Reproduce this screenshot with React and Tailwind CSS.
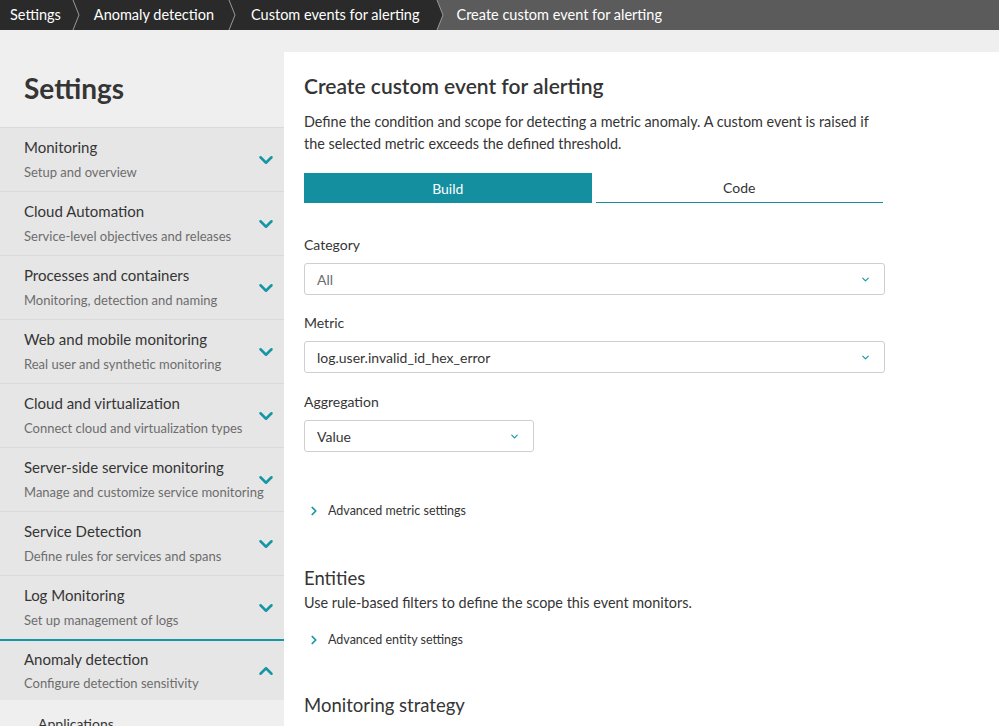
import { ChevronDown, ChevronUp, ChevronRight } from 'lucide-react';

const crumbs = [
  { label: 'Settings', pad: 'pl-[10px] pr-[9px]' },
  { label: 'Anomaly detection', pad: 'pl-[6px] pr-[12px]' },
  { label: 'Custom events for alerting', pad: 'pl-[7px] pr-[14px]' },
];

const navItems = [
  { title: 'Monitoring', sub: 'Setup and overview' },
  { title: 'Cloud Automation', sub: 'Service-level objectives and releases' },
  { title: 'Processes and containers', sub: 'Monitoring, detection and naming' },
  { title: 'Web and mobile monitoring', sub: 'Real user and synthetic monitoring' },
  { title: 'Cloud and virtualization', sub: 'Connect cloud and virtualization types' },
  { title: 'Server-side service monitoring', sub: 'Manage and customize service monitoring' },
  { title: 'Service Detection', sub: 'Define rules for services and spans' },
  { title: 'Log Monitoring', sub: 'Set up management of logs' },
];

function Separator({ last }) {
  return (
    <svg width="18" height="30" viewBox="0 0 18 30" className="shrink-0">
      {last && <polygon points="3,0 18,0 18,30 3,30 9,15" fill="#5b5b5b" />}
      <polyline points="3,0 9,15 3,30" fill="none" stroke="#9a9a9a" strokeWidth="1" />
    </svg>
  );
}

function Breadcrumbs() {
  return (
    <div className="flex h-[30px] items-stretch bg-[#2a2a2a] text-[14.5px] text-white">
      {crumbs.map((c, i) => (
        <div key={c.label} className="flex items-center">
          <span className={c.pad}>{c.label}</span>
          <Separator last={i === crumbs.length - 1} />
        </div>
      ))}
      <div className="flex flex-1 items-center bg-[#5b5b5b] pl-[5px]">Create custom event for alerting</div>
    </div>
  );
}

function NavItem({ title, sub, open }) {
  return (
    <div
      className={`flex items-center bg-[#e6e6e6] pl-6 pr-[7px] ${
        open ? 'h-[61px] border-t-2 border-[#1496a4]' : 'h-[64px] border-t border-[#dadada]'
      }`}
    >
      <div className="min-w-0 flex-1 whitespace-nowrap">
        <div className="text-[15px] leading-5">{title}</div>
        <div className={`${open ? 'mt-[4px]' : 'mt-[5px]'} text-[13px] leading-5 text-[#6d6d6d]`}>{sub}</div>
      </div>
      {open ? (
        <ChevronUp className="relative h-[22px] w-[22px] shrink-0 text-[#1496a4]" strokeWidth={2.75} />
      ) : (
        <ChevronDown className="relative h-[22px] w-[22px] shrink-0 text-[#1496a4]" strokeWidth={2.75} />
      )}
    </div>
  );
}

function Sidebar() {
  return (
    <aside className="w-[284px] shrink-0 bg-[#efefef] text-[#353535]">
      <h1 className="pl-6 pt-[39px] pb-[20px] text-[28px] font-bold leading-[38px]">Settings</h1>
      {navItems.map((item) => (
        <NavItem key={item.title} title={item.title} sub={item.sub} />
      ))}
      <NavItem title="Anomaly detection" sub="Configure detection sensitivity" open />
      <div className="pl-[38px] pt-[14px] text-[14px] leading-5">Applications</div>
    </aside>
  );
}

function Select({ value, muted, className }) {
  return (
    <div
      className={`flex h-[32px] items-center justify-between rounded-[3px] border border-[#cfcfcf] bg-white pl-[12px] pr-[13px] text-[14px] ${
        muted ? 'text-[#6d6d6d]' : 'text-[#353535]'
      } ${className}`}
    >
      <span>{value}</span>
      <ChevronDown className="h-[11px] w-[11px] text-[#1496a4]" strokeWidth={2.5} />
    </div>
  );
}

function Expander({ label, className }) {
  return (
    <div className={`flex items-center text-[12.5px] leading-5 text-[#353535] ${className}`}>
      <ChevronRight className="ml-[3px] mr-[7px] h-[14px] w-[14px] text-[#1496a4]" strokeWidth={3} />
      {label}
    </div>
  );
}

export default function App() {
  return (
    <div className="h-[726px] overflow-hidden bg-[#efefef] font-['Lato',sans-serif]">
      <Breadcrumbs />
      <div className="flex">
        <Sidebar />
        <main className="mt-[22px] min-h-[700px] flex-1 bg-white pl-5 pt-5 text-[#353535]">
          <div className="max-w-[581px]">
            <h2 className="text-[21px] font-semibold leading-7">Create custom event for alerting</h2>
            <p className="mt-[11px] text-[14.4px] leading-[22px]">
              Define the condition and scope for detecting a metric anomaly. A custom event is raised if the selected metric exceeds the defined threshold.
            </p>

            <div className="mt-[18px] flex gap-1 pr-[2px] text-[14px]">
              <button className="h-[30px] flex-1 bg-[#138f9f] text-white">Build</button>
              <button className="h-[30px] flex-1 border-b-[1.5px] border-[#138f9f] text-[#353535]">Code</button>
            </div>

            <label className="mt-8 block text-[14px] leading-5">Category</label>
            <Select value="All" muted className="mt-2" />

            <label className="mt-[18px] block text-[14px] leading-5">Metric</label>
            <Select value="log.user.invalid_id_hex_error" className="mt-2" />

            <label className="mt-[19px] block text-[14px] leading-5">Aggregation</label>
            <Select value="Value" className="mt-2 w-[230px]" />

            <Expander label="Advanced metric settings" className="mt-[49px]" />

            <h3 className="mt-[45px] text-[18.5px] leading-6">Entities</h3>
            <p className="mt-[3px] text-[14.4px] leading-5">Use rule-based filters to define the scope this event monitors.</p>

            <Expander label="Advanced entity settings" className="mt-[17px]" />

            <h3 className="mt-[43px] text-[18.5px] leading-6">Monitoring strategy</h3>
            <p className="mt-[10px] text-[14.4px] leading-5">
              The monitoring strategy defines what type of anomalies can be detected on a selected metric.
            </p>
          </div>
        </main>
      </div>
    </div>
  );
}
